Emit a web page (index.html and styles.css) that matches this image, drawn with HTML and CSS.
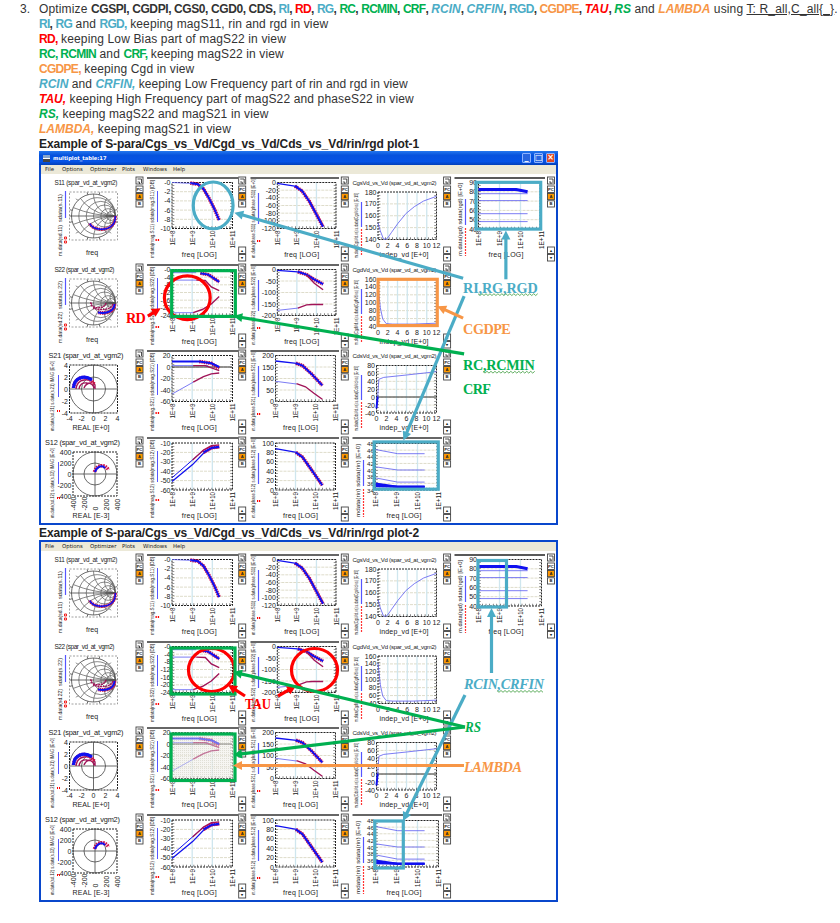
FILE: index.html
```
<!DOCTYPE html>
<html lang="en">
<head>
<meta charset="utf-8">
<title>Optimize parameters</title>
<link rel="stylesheet" href="styles.css">
</head>
<body>
<main class="step">
<div class="num">3.</div>
<div class="body">
<p class="l1">Optimize <b>CGSPI, CGDPI, CGS0, CGD0, CDS, <span class="c">RI</span>, <span class="r">RD</span>, <span class="c">RG</span>, <span class="g">RC</span>, <span class="g">RCMIN</span>, <span class="g">CRF</span>, <i class="c">RCIN</i>, <i class="c">CRFIN</i>, <span class="c">RGD</span>, <span class="o">CGDPE</span>, <i class="r">TAU</i>, <i class="g">RS</i></b> and <b><i class="o">LAMBDA</i></b> using <u>T: R_all,C_all{_}</u>.</p>
<p><b><span class="c">RI</span>, <span class="c">RG</span></b> and <b class="c">RGD,</b> keeping magS11, rin and rgd in view</p>
<p><b class="r">RD,</b> keeping Low Bias part of magS22 in view</p>
<p><b class="g">RC, RCMIN</b> and <b class="g">CRF,</b> keeping magS22 in view</p>
<p><b class="o">CGDPE,</b> keeping Cgd in view</p>
<p class="tight"><b class="c"><i>RCIN</i></b> and <b class="c"><i>CRFIN,</i></b> keeping Low Frequency part of rin and rgd in view</p>
<p><b class="r"><i>TAU,</i></b> keeping High Frequency part of magS22 and phaseS22 in view</p>
<p><b class="g"><i>RS,</i></b> keeping magS22 and magS21 in view</p>
<p><b class="o"><i>LAMBDA,</i></b> keeping magS21 in view</p>
<p class="cap"><b>Example of S-para/Cgs_vs_Vd/Cgd_vs_Vd/Cds_vs_Vd/rin/rgd plot-1</b></p>
<section class="win first">
<header class="title"><span class="appicon"></span><span class="name">multiplot_table:17</span><span class="ctl">_</span><span class="ctl">□</span><span class="ctl close">×</span></header>
<nav class="menu"><span>File</span><span>Options</span><span>Optimizer</span><span>Plots</span><span>Windows</span><span>Help</span></nav>
<div class="plots"></div>
<svg class="notes" viewBox="39 151 519 374">
<g fill="none" stroke-width="3.2">
<ellipse cx="212.7" cy="205.7" rx="20" ry="23.5" stroke="#4bacc6"/>
<ellipse cx="186.7" cy="298.5" rx="23" ry="22" stroke="#f00"/>
<rect x="171" y="271.3" width="64" height="46" stroke="#00b050"/>
<rect x="378.5" y="280" width="59.5" height="46.5" stroke="#f79646"/>
<rect x="477" y="182.5" width="65" height="47" stroke="#4bacc6"/>
<rect x="374.5" y="443.5" width="64.5" height="47.5" stroke="#4bacc6"/>
</g>
<g class="arrows" data-a="464,279,234,213,#4bacc6;507,280,507,231,#4bacc6;465,297,404,442,#4bacc6;464,319,438,307,#f79646;465,355,233,317,#00b050;147,317,160,309,#f00"></g>
<g class="labels">
<text x="125" y="324" textLength="20" fill="#f00">RD</text>
<text x="464" y="293.5" textLength="75" fill="#4bacc6">RI,RG,RGD</text>
<text x="464" y="335" textLength="48" fill="#f79646">CGDPE</text>
<text x="464" y="371.5" textLength="72" fill="#00b050">RC,RCMIN</text>
<text x="464" y="395.5" textLength="28" fill="#00b050">CRF</text>
</g>
<g class="wave" data-w="479,539,294.5;484,536,372.5"></g>
</svg>
</section>
<p class="cap"><b>Example of S-para/Cgs_vs_Vd/Cgd_vs_Vd/Cds_vs_Vd/rin/rgd plot-2</b></p>
<section class="win second">
<nav class="menu"><span>File</span><span>Options</span><span>Optimizer</span><span>Plots</span><span>Windows</span><span>Help</span></nav>
<div class="plots shaded"></div>
<svg class="notes" viewBox="39 540 519 362">
<g fill="none" stroke-width="3.2">
<ellipse cx="211.5" cy="670" rx="23" ry="21.5" stroke="#f00"/>
<ellipse cx="314.5" cy="670" rx="23" ry="21.5" stroke="#f00"/>
<rect x="171" y="648" width="64" height="46" stroke="#00b050"/>
<rect x="171" y="734" width="64" height="46.5" stroke="#00b050"/>
<rect x="478" y="560.5" width="28.5" height="46.5" stroke="#4bacc6"/>
<rect x="374.8" y="821" width="28.5" height="47" stroke="#4bacc6"/>
</g>
<g class="arrows" data-a="245,696,228,685,#f00;278,696,296,686,#f00;491.5,673,491.5,608,#4bacc6;465,695,403,821,#4bacc6;465,727,233,672,#00b050;465,727,233,755,#00b050;464,765.5,233,765.5,#f79646"></g>
<g class="labels">
<text x="245" y="708.5" textLength="26" lengthAdjust="spacingAndGlyphs" fill="#f00">TAU</text>
<g font-style="italic">
<text x="464" y="689" textLength="80" fill="#4bacc6">RCIN,CRFIN</text>
<text x="465" y="731.5" textLength="16" lengthAdjust="spacingAndGlyphs" fill="#00b050">RS</text>
<text x="464" y="772" textLength="58" fill="#f79646">LAMBDA</text>
</g>
</g>
<g class="wave" data-w="497,543,690.5"></g>
</svg>
</section>
</div>
</main>
<script src="plots.js"></script>
</body>
</html>
```
FILE: styles.css
```
body { margin: 0; background: #fff; color: #333; font: 12px/17px "Liberation Sans", Arial, sans-serif; overflow: hidden; }
p { margin: 0; height: 15px; white-space: nowrap; letter-spacing: .14px; }
.tight { letter-spacing: .07px; }
.step { display: flex; padding-top: 1px; }
.num { width: 39px; padding-left: 20px; box-sizing: border-box; flex: none; }
.body { width: 801px; }
b { letter-spacing: -.4px; }
.c { color: #4bacc6; letter-spacing: -.7px; }
.r { color: #f00; letter-spacing: -.7px; }
.g { color: #00b050; letter-spacing: -.7px; }
.o { color: #f79646; letter-spacing: -.7px; }
p b i, p b i[class] { letter-spacing: 0; }
.cap { color: #222; }
.cap b { letter-spacing: -.11px; }
.win { position: relative; box-sizing: border-box; width: 519px; border: solid #0947cc; border-width: 0 2px 2px; background: #fff; }
.first { height: 374px; }
.second { height: 362px; border-top-width: 2px; }
.title { display: flex; align-items: center; height: 14px; margin: 0 -2px; padding: 0 3px 0 4px; background: linear-gradient(#2478ee, #0652dd 30%, #0553e6 75%, #0340b8); color: #fff; gap: 3px; }
.appicon { width: 7px; height: 7px; background: linear-gradient(#87a6cc 45%, #fff 45% 60%, #444 60%); }
.name { flex: 1; font: bold 5.2px/8px "DejaVu Sans", sans-serif; }
.ctl { box-sizing: border-box; width: 9px; height: 10px; border: 1px solid #8cb2ff; border-radius: 1px; background: #2865df; font: bold 8px/7px "DejaVu Sans", sans-serif; text-align: center; }
.close { background: #e04a24; }
.menu { display: grid; grid-template-columns: 17px 28px 32px 21px 30px 30px; height: 9px; padding-left: 4px; background: #ece9d8; color: #222; font: 5.4px/9px "DejaVu Sans", sans-serif; white-space: nowrap; }
.plots { display: grid; grid-template-columns: 106px 103px 102px 101px 103px; grid-auto-rows: 86.5px; }
.plots svg { display: block; width: 100%; height: 100%; overflow: visible; font: 7px "Liberation Sans", Arial, sans-serif; fill: #222; }
.notes { position: absolute; left: -2px; top: 0; width: 519px; height: 100%; }
.second .notes { top: -2px; height: 362px; }
.labels { font: bold 14.3px "Liberation Serif", "Times New Roman", serif; }
.labels [font-style] { font-style: italic; }
.frame { fill: none; stroke: #222; stroke-width: 1; stroke-dasharray: 2 1; }
.solid { fill: none; stroke: #222; stroke-width: .8; }
.grid { fill: none; stroke: #cfe6ee; stroke-width: 1.3; }
.gridh { fill: none; stroke: #dedcca; stroke-width: 1; stroke-dasharray: 3 1; }
.thin { fill: none; stroke: #5a5af0; stroke-width: .8; }
.thick { fill: none; stroke: #1010f0; stroke-width: 2; }
.edge { fill: none; stroke: #d01048; stroke-width: 3.6; stroke-dasharray: 1.5 .8; }
.purple { fill: none; stroke: #a01458; stroke-width: 1.4; }
.circle { fill: none; stroke: #444; stroke-width: .8; }
.arc { fill: none; stroke: #555; stroke-width: .7; }
```
FILE: plots.js
```
const X0 = [41, 147, 250, 352, 453], W = [106, 103, 102, 101, 103];
const BTN = [136, 238.7, 341.3, 443.6, 547.5];
const poly = (f, pts, cls) => `<polyline class="${cls}" points="${pts.map(([u, v]) => (f[0] + u * (f[2] - f[0])).toFixed(1) + ',' + (f[1] + v * (f[3] - f[1])).toFixed(1)).join(' ')}"/>`;
const bold = (f, p) => poly(f, p, 'edge') + poly(f, p, 'thick');
const txt = (x, y, s, a = 'start', extra = '') => `<text x="${x}" y="${y}" text-anchor="${a}" ${extra}>${s}</text>`;
const vert = (x, y, s, len, size, col = '#222') => `<text transform="translate(${x} ${y}) rotate(-90)" textLength="${len}" lengthAdjust="spacingAndGlyphs" font-size="${size}" fill="${col}">${s}</text>`;
const line = (x1, y1, x2, y2, col = '#222', w = 1, d = 'none') => `<line x1="${x1}" y1="${y1}" x2="${x2}" y2="${y2}" stroke="${col}" stroke-width="${w}" stroke-dasharray="${d}"/>`;

function buttons(c) {
  const x = BTN[c];
  let s = '';
  const box = (y, h, fill, t) => `<rect x="${x}" y="${y}" width="7" height="${h}" fill="${fill}" stroke="#444" stroke-width=".9"/>` + (t ? txt(x + 3.5, y + h / 2 + 1.5, t, 'middle', 'font-size="4.2" font-weight="bold"') : '');
  s += box(3, 7, '#fff') + `<path class="solid" d="M${x + 1.5} 5h4v4M${x + 1.5} 8h2v2"/>`;
  s += box(12, 6.5, '#fff', 'PC') + box(19.5, 6.2, '#f90', 'A') + box(26.8, 6.2, '#fff', 'B');
  if (c) s += box(73, 6.5, '#fff', '▴') + box(80.5, 6.5, '#fff', '▾');
  return s;
}

function axes(f, ys, log, xs) {
  let s = '';
  const [a, t, b, e] = f;
  const fs = ys.length > 7 ? 6.2 : 7;
  ys.forEach((v, i) => {
    const y = t + (e - t) * i / (ys.length - 1);
    if (i && i < ys.length - 1) s += `<path class="gridh" d="M${a} ${y}H${b}"/>`;
    s += txt(a - 1.5, y + 2.5, v, 'end', `font-size="${fs}"`);
  });
  const n = xs.length - 1;
  xs.forEach((v, i) => {
    const x = a + (b - a) * i / n;
    if (i && i < n) s += `<path class="grid" d="M${x} ${t}V${e}"/>`;
    s += log ? vert(x + 2.5, e + (v.length > 4 ? 20 : 17), v, v.length > 4 ? 18 : 15, 7) : txt(x, e + 8, v, 'middle');
  });
  return s + `<rect class="frame" x="${a}" y="${t}" width="${b - a}" height="${e - t}"/><path d="M${a + 1.3} ${t}V${e}M${b - 1.3} ${t}V${e}" stroke="#333" stroke-width="2" stroke-dasharray=".6 2.4"/><path d="M${a} ${e - 1.2}H${b}" stroke="#333" stroke-width="2" stroke-dasharray=".6 3"/>`;
}
const LOG = ['1E+8', '1E+9', '1E+10', '1E+11'];
const LIN = [0, 2, 4, 6, 8, 10, 12];
const mid = f => (f[0] + f[2]) / 2;

// Smith chart grid: constant resistance circles and constant reactance arcs
function smith(r, id) {
  const cx = 93.5, cy = 42, R = 22;
  let s = `<rect x="69.5" y="18" width="48" height="48" fill="none" stroke="#888" stroke-width=".8" stroke-dasharray="2 1.5"/><clipPath id="${id}"><circle cx="${cx}" cy="${cy}" r="${R}"/></clipPath><circle class="circle" cx="${cx}" cy="${cy}" r="${R}"/><path class="circle" d="M69.5 42h48"/><g clip-path="url(#${id})">`;
  for (const k of [.2, .5, 1, 2, 4]) { const q = R / (1 + k); s += `<circle class="arc" cx="${cx + R - q}" cy="${cy}" r="${q}"/>`; }
  for (const k of [.2, .5, 1, 2, 4]) for (const d of [-1, 1]) s += `<circle class="arc" cx="${cx + R}" cy="${cy + d * R / k}" r="${R / k}"/>`;
  s += '</g>';
  for (let i = 0; i < 12; i++) { const a = i * Math.PI / 6 + .26; s += line(cx + R * Math.cos(a), cy + R * Math.sin(a), cx + 24.5 * Math.cos(a), cy + 24.5 * Math.sin(a), '#444', .8); }
  if (r === 0) {
    const d = 'M115.3 42C116 52 108 55.5 101 55.3C95 55 91 52.5 89.8 49.5';
    s += `<path class="edge" style="stroke-width:3.2" d="${d}"/><path class="thick" style="stroke-width:1.5" d="${d}"/>`;
  } else {
    s += `<path class="edge" d="M114.5 43C115 50 108 53 98 51.5"/><path class="thick" d="M114.5 43C114 50 108 53 98 51.5"/><path class="purple" stroke-dasharray="2 .6" d="M113 43C111 49 100 50 93 47M106 42C105 47 97 48 92 45M90 42q3 0 1 3"/>`;
  }
  return s;
}

function cell(r, c, id, shaded) {
  const S = ['S11', 'S22', 'S21', 'S12'][r];
  let s = '', f;
  if (c === 0) {
    s += r < 2 ? txt(54.5, 10.5, `${S} (spar_vd_at_vgm2)`, 'start', `font-size="6.4" textLength="${r ? 60 : 63}"`) : txt(r === 2 ? 48.5 : 45, 10.5, `${S} (spar_vd_at_vgm2)`, 'start', 'font-size="7.4" textLength="75"');
    if (r < 2) {
      s += vert(62, 82, `m.data(sd.${S.slice(1)})`, 31, 5.6) + vert(62, 48, `sdata(s.${S.slice(1)})`, 28, 5.6) + line(65.5, 17, 65.5, 44, '#55f', 1.2) + `<path fill="none" stroke="#e22" d="M64.5 63h2v2h-2zM64.5 67h2v2h-2z"/>` + smith(r, id) + txt(92, 81, 'freq', 'middle');
    } else {
      f = r === 2 ? [69.5, 18, 117.5, 66] : [73, 18, 117, 62];
      const cx = mid(f), cy = (f[1] + f[3]) / 2, R = cx - f[0];
      s += `<rect class="frame" x="${f[0]}" y="${f[1]}" width="${2 * R}" height="${2 * R}"/><circle class="circle" cx="${cx}" cy="${cy}" r="${R}"/><circle class="circle" cx="${cx}" cy="${cy}" r="${R / 2}"/><path class="circle" d="M${f[0]} ${cy}H${f[2]}M${cx} ${f[1]}V${f[3]}"/>`;
      const n = r === 2 ? [4, 2, 0, -2, -4] : [400, 200, 0, -200, -400];
      n.forEach((v, i) => {
        s += txt(f[0] - 1.5, f[1] + i * R / 2 + 2.5, v, 'end');
        const x = f[2] - i * R / 2;
        s += r === 2 ? txt(x, 73.5, v, 'middle') : `<text transform="translate(${x + 2.5} 76.5) rotate(-90)">${v}</text>`;
      });
      s += r === 2 ? `<path class="purple" d="M76 42q1-8 8-9q9-1 11 5v4M79 42q1-7 8-6q6 0 7 5M84 41q2-5 7-5"/><path class="edge" d="M73.5 41C74 30 87 26 94 37"/><path class="thick" style="stroke-width:3.2" d="M73.5 41C74 31 84 27 92 33"/>` : `<path class="edge" d="M94.5 38c2-8 11-8 14-2"/><path class="thick" d="M95 38c2-6 7-7 10-4"/>`;
      s += txt(91, r === 2 ? 82.5 : 83.8, r === 2 ? 'REAL [E+0]' : 'REAL [E-3]', 'middle', 'textLength="37"');
      s += vert(53.5, 84, `m.data(sd.${S.slice(1)})  s.data(s.${S.slice(1)})  IMAG [E+0]`, 70, 4.6) + line(58.5, 28, 58.5, 50, '#55f') + line(57, 64, 60, 64, '#f00', 2, '1 1');
    }
  } else if (c === 1) {
    f = r < 3 ? [172, 8.5, 232.5, 54.5] : [172, 9, 232.5, 56];
    const ys = [['-0', -2, -4, -6, -8, -10], ['-0', -4, -8, -12, -16, -20, -24], [20, 0, -20, -40, -60], [-10, -20, -30, -40, -50, -60]][r];
    s += line(147, 4, 238, 4, '#333', 1.5) + axes(f, ys, true, LOG);
    if (shaded && r === 2) s += `<defs><pattern id="dots" width="2" height="2" patternUnits="userSpaceOnUse"><rect width="1" height="1" fill="#d2d0c4"/></pattern></defs><rect x="172" y="8.5" width="61" height="46" fill="#f0efe9" opacity=".6"/><rect x="172" y="8.5" width="61" height="46" fill="url(#dots)" opacity=".6"/>`;
    if (r === 0) s += bold(f, [[.3, .01], [.43, .04], [.52, .14], [.61, .34], [.7, .57], [.78, .82]]) + poly(f, [[0, 0], [.32, .02]], 'thin');
    if (r === 1) s += poly(f, [[0, .07], [.4, .07]], 'thin') + poly(f, [[0, .23], [.4, .23]], 'thin') + poly(f, [[0, .94], [.35, .94]], 'thin') + bold(f, [[.47, .08], [.6, .11], [.78, .27]]) + poly(f, [[.4, .23], [.55, .24], [.65, .38], [.78, .46]], 'purple') + poly(f, [[.35, .94], [.5, .87], [.65, .75], [.78, .59]], 'purple');
    if (r === 2) s += `<g opacity="${shaded ? .55 : 1}">` + line(172, 20, 232, 20, '#333') + poly(f, [[0, .22], [.6, .22]], 'thin') + poly(f, [[.45, .13], [.65, .17], [.78, .28]], 'edge') + poly(f, [[0, .13], [.45, .13], [.65, .17], [.78, .25]], 'thick') + poly(f, [[.35, .22], [.55, .22], [.78, .33]], 'purple') + poly(f, [[0, .84], [.35, .58]], 'thin') + poly(f, [[.35, .58], [.52, .46], [.65, .4], [.78, .38]], 'purple') + '</g>';
    if (r === 3) s += poly(f, [[0, .74], [.34, .36], [.52, .15]], 'thick" style="stroke-width:1') + poly(f, [[.34, .36], [.52, .15], [.65, .06], [.78, .04]], 'purple') + poly(f, [[0, .82], [.34, .46], [.52, .22], [.65, .12], [.78, .1]], 'thick" style="stroke-width:1.3') + bold(f, [[.52, .2], [.66, .1], [.78, .08]]);
    s += txt(mid(f) - 3, 82.5 + (r === 3), 'freq [LOG]', 'middle', 'textLength="35"') + vert(153.5, 84, `mdata(mag.${S})  sdata(mag.${S}) [DB]`, 78, 5.2) + line(157.5, 17, 157.5, 48, '#55f') + line(155.5, 66, 159.5, 66, '#f00', 2.2, '1.3 1');
  } else if (c === 2) {
    f = [[277.3, 8.5, 336, 54.5], [277.3, 8.5, 336, 54.5], [275.5, 8.5, 335.5, 54.5], [275.5, 9, 335.5, 56]][r];
    const ys = [[0, -20, -40, -60, -80, -100, -120], [0, -50, -100, -150, -200], [200, 150, 100, 50, 0], [100, 80, 60, 40, 20, 0]][r];
    s += line(250.5, 4, 339, 4, '#333', 1.5) + axes(f, ys, true, LOG);
    if (r === 0) s += bold(f, [[.3, .08], [.42, .18], [.55, .42], [.67, .7], [.78, .96]]) + poly(f, [[0, .02], [.35, .09]], 'thick" style="stroke-width:1.3');
    if (r === 1) s += poly(f, [[0, .02], [.35, .05]], 'thick" style="stroke-width:1.3') + bold(f, [[.35, .05], [.5, .11], [.62, .21], [.78, .32]]) + poly(f, [[.5, .12], [.63, .3], [.78, .44]], 'purple') + poly(f, [[0, .89], [.35, .84]], 'thin') + poly(f, [[.35, .84], [.5, .77], [.6, .76], [.78, .76]], 'purple');
    if (r === 2) s += poly(f, [[0, .12], [.35, .17]], 'thick" style="stroke-width:1.3') + bold(f, [[.34, .17], [.45, .22], [.6, .4], [.78, .65]]) + poly(f, [[0, .56], [.35, .62]], 'thin') + poly(f, [[.35, .61], [.5, .68], [.64, .82], [.78, .95]], 'purple');
    if (r === 3) s += poly(f, [[0, .12], [.35, .2]], 'thick" style="stroke-width:1.3') + bold(f, [[.34, .2], [.45, .3], [.6, .57], [.78, .9]]);
    s += txt(mid(f) - 5, 82.5 + (r === 3), 'freq [LOG]', 'middle', 'textLength="35"') + vert(255, 84, `m.data(phase.${S})  s.data(phase.${S}) [E+0]`, 79, 4.5) + line(258.5, 19, 258.5, 50, '#55f', 1.2) + line(257, 67, 260.5, 67, '#f00', 2.2, '1.2 .8');
  } else if (c === 3 && r < 3) {
    f = r < 2 ? [378, 18, 436.5, 65.5] : [376.5, 18.5, 436.5, 66];
    const ys = [[180, 170, 160, 150, 140], [160, 140, 120, 100, 80, 60, 40], [80, 60, 40, 20, 0, -20, -40]][r];
    const n = ['Cgs', 'Cgd', 'Cds'][r];
    s += txt(352.5, 10.5, `${n}Vd_vs_Vd (spar_vd_at_vgm2)`, 'start', 'font-size="6" textLength="84"') + axes(f, ys, false, LIN);
    if (r === 0) s += poly(f, [[0, .65], [.04, .82], [.09, .98], [.13, 1], [.17, .96], [.23, .85], [.34, .66], [.48, .45], [.62, .31], [.78, .19], [1, .09]], 'thin');
    if (r === 1) s += poly(f, [[0, .15], [.04, .6], [.08, .84], [.14, .94], [.25, .95], [.6, .95], [1, .93]], 'thin');
    if (r === 2) s += line(376.5, 50, 436.5, 50, '#333') + poly(f, [[0, .9], [.02, .65]], 'thick') + poly(f, [[.02, .65], [.04, .29], [.12, .25], [.5, .2], [1, .13]], 'thin');
    s += txt(404, 82.5, 'indep_vd [E+0]', 'middle', 'textLength="49"') + vert(358, 84, `m.data(${n}Vd.vs)  s.data(${n}Vd.vs) [E-15]`, 65, 4.7) + line(361.5, 28, 361.5, 53, '#55f', 1.2) + line(361.5, 55, 361.5, 82, '#f33', 1.2, '2 1');
  } else if (c === 3) {
    f = [375.5, 9.5, 438.5, 56];
    s += line(352.5, 4, 442, 4, '#333', 1.5) + axes(f, [48, 46, 44, 42, 40, 38, 36, 34], true, LOG);
    for (const [a, b] of [[.13, .22], [.5, .57], [.74, .83]]) s += poly(f, [[0, a], [.35, b], [.78, b]], 'thin');
    for (const d of [.86, .89, .92]) s += poly(f, [[0, d], [.35, .93], [.78, .93]], 'thick');
    s += txt(404, 83.5, 'freq [LOG]', 'middle', 'textLength="35"') + vert(360, 83, 'mdata(rin)  sdata(rin) [E+0]', 73, 6) + line(363.5, 26, 363.5, 52, '#55f', 1.2) + line(363.5, 55, 363.5, 83, '#f33', 1.2, '2 1');
  } else if (r === 0) {
    f = [478.5, 8.5, 541.5, 55];
    s += line(454.5, 4, 545, 4, '#222', 1.5) + axes(f, [90, 80, 70, 60, 50, 40], true, LOG);
    for (const v of [.24, .39, .67, .84]) s += poly(f, [[0, v], [.78, v]], 'thin');
    s += poly(f, [[0, .15], [.6, .15], [.78, .2]], 'thick" style="stroke-width:3.2') + txt(506, 82.5, 'freq [LOG]', 'middle', 'textLength="35"') + vert(461.5, 82, 'm.data(rgd)  sdata(rgd) [E+0]', 73, 6) + line(465.5, 25, 465.5, 51, '#55f', 1.2) + line(465.5, 54, 465.5, 82, '#f33', 1.2, '2 1');
  }
  if (c < 4 || r === 0) s += buttons(c);
  return `<svg viewBox="${X0[c]} 0 ${W[c]} 86.5" preserveAspectRatio="none">${s}</svg>`;
}

document.querySelectorAll('.plots').forEach((p, k) => {
  let h = '';
  for (let r = 0; r < 4; r++) for (let c = 0; c < 5; c++) h += cell(r, c, `sm${k}${r}`, k === 1);
  p.innerHTML = h;
});

document.querySelectorAll('.arrows').forEach(g => {
  g.innerHTML = g.dataset.a.split(';').map(d => {
    const [x1, y1, x2, y2, col] = d.split(',');
    const a = Math.atan2(y2 - y1, x2 - x1), ex = x2 - 7 * Math.cos(a), ey = y2 - 7 * Math.sin(a);
    return line(x1, y1, ex, ey, col, 3.2) + `<path transform="translate(${x2} ${y2}) rotate(${a * 180 / Math.PI})" d="M0 0L-9 -4.5V4.5Z" fill="${col}"/>`;
  }).join('');
});

document.querySelectorAll('.wave').forEach(g => {
  g.innerHTML = g.dataset.w.split(';').map(d => {
    const [a, b, y] = d.split(',').map(Number);
    let p = `M${a} ${y}`;
    for (let x = a, i = 0; x < b; x += 2, i++) p += `l2 ${i % 2 ? -1.8 : 1.8}`;
    return `<path d="${p}" fill="none" stroke="#3a9a3a" stroke-width=".8"/>`;
  }).join('');
});
```
